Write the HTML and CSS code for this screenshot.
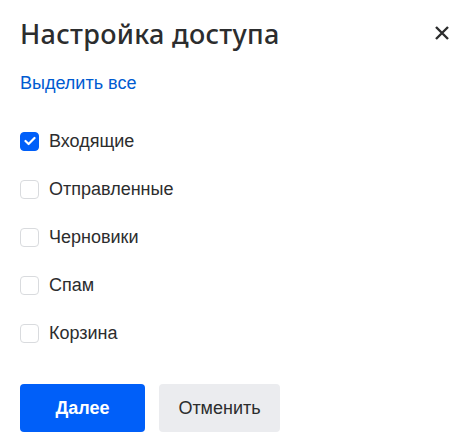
FILE: index.html
```html
<!DOCTYPE html>
<html lang="ru">
<head>
<meta charset="utf-8">
<link rel="stylesheet" href="styles.css">
</head>
<body>
<div class="dialog">
  <div class="header">
    <h1 class="title">Настройка доступа</h1>
    <button class="close" aria-label="Закрыть">
      <svg width="16" height="16" viewBox="0 0 16 16"><path d="M2 2 L14 14 M14 2 L2 14" stroke="#2c2d2e" stroke-width="2.4" stroke-linecap="butt"/></svg>
    </button>
  </div>
  <a class="select-all" href="#">Выделить все</a>
  <div class="list">
    <label class="row"><span class="box checked"><svg width="12" height="10" viewBox="0 0 12 10"><path d="M1.5 5 L4.6 8 L10.5 2" fill="none" stroke="#fff" stroke-width="2.2" stroke-linecap="round" stroke-linejoin="round"/></svg></span><span class="label">Входящие</span></label>
    <label class="row"><span class="box"></span><span class="label">Отправленные</span></label>
    <label class="row"><span class="box"></span><span class="label">Черновики</span></label>
    <label class="row"><span class="box"></span><span class="label">Спам</span></label>
    <label class="row"><span class="box"></span><span class="label">Корзина</span></label>
  </div>
  <div class="actions">
    <button class="btn primary">Далее</button>
    <button class="btn secondary">Отменить</button>
  </div>
</div>
</body>
</html>
```
FILE: styles.css
```css
html, body {
  margin: 0;
  padding: 0;
  background: #fff;
}
body {
  font-family: "Liberation Sans", Arial, sans-serif;
  color: #2c2d2e;
}
.dialog {
  padding: 12px 20px 0 20px;
  display: flex;
  flex-direction: column;
}
.header {
  display: flex;
  align-items: center;
  justify-content: space-between;
  height: 42px;
}
.title {
  margin: 0;
  font-family: "Noto Sans", sans-serif;
  font-weight: 500;
  font-size: 27px;
  letter-spacing: 0.3px;
  color: #2c2d2e;
}
.close {
  border: 0;
  background: none;
  padding: 0;
  margin-right: 1px;
  width: 16px;
  height: 16px;
  display: flex;
}
.select-all {
  margin-top: 19px;
  font-size: 18px;
  color: #005bd1;
  text-decoration: none;
  align-self: flex-start;
  line-height: 20px;
}
.list {
  margin-top: 38px;
  display: flex;
  flex-direction: column;
  gap: 28px;
}
.row {
  display: flex;
  align-items: center;
  gap: 10px;
  height: 20px;
  font-size: 18px;
}
.box {
  width: 17px;
  height: 17px;
  border: 1px solid #d9dbde;
  border-radius: 4px;
  display: flex;
  align-items: center;
  justify-content: center;
  box-sizing: content-box;
}
.box.checked {
  background: #005ff9;
  border-color: #005ff9;
}
.label {
  color: #2c2d2e;
}
.actions {
  margin-top: 41px;
  display: flex;
  gap: 14px;
}
.btn {
  height: 48px;
  border: 0;
  border-radius: 4px;
  font-family: "Liberation Sans", Arial, sans-serif;
  font-size: 18px;
  padding: 0;
}
.primary {
  width: 125px;
  background: #005ff9;
  color: #fff;
  font-weight: 700;
}
.secondary {
  width: 121px;
  background: #ebecef;
  color: #2c2d2e;
}
```
